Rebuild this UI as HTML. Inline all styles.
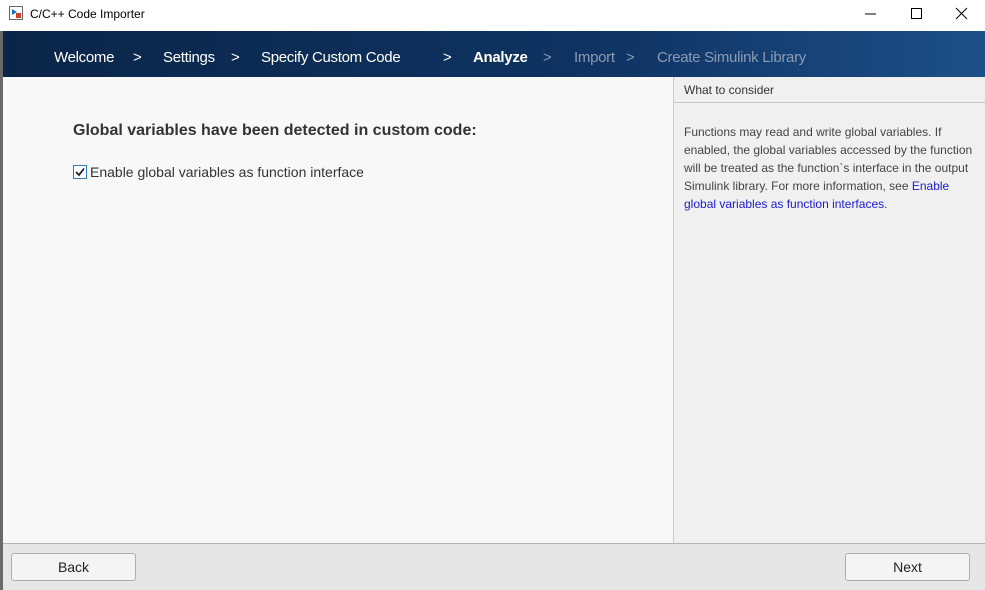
<!DOCTYPE html>
<html><head><style>
*{margin:0;padding:0;box-sizing:border-box}
body{width:985px;height:590px;position:relative;background:#fff;font-family:"Liberation Sans",Arial,sans-serif;overflow:hidden}
.t{position:absolute;font-size:13px;color:#000}
#frame{position:absolute;left:0;top:31px;width:3px;height:559px;background:#6a6a6a}
#ban{position:absolute;left:3px;top:31px;width:982px;height:46px;background:linear-gradient(90deg,#0a2548 0%,#0f3362 60%,#1d4f88 100%)}
.n{position:absolute;top:18px;font-size:15px;color:#fff;letter-spacing:-0.3px}
.d{color:#8a9bb3}
#main{position:absolute;left:3px;top:77px;width:670px;height:466px;background:#f8f8f8}
#side{position:absolute;left:673px;top:77px;width:312px;height:466px;background:#f0f0f0;border-left:1px solid #c8c8c8}
#foot{position:absolute;left:3px;top:543px;width:982px;height:47px;background:#e6e6e6;border-top:1px solid #b4b4b4}
.btn{position:absolute;top:9px;width:125px;height:28px;border:1px solid #adadad;border-radius:3px;background:#f4f4f4;font-size:14px;color:#222;text-align:center;line-height:26px}
</style></head><body>
<svg style="position:absolute;left:9px;top:6px" width="14" height="14"><rect x="0.5" y="0.5" width="13" height="13" fill="#fff" stroke="#666"/><path d="M3 3 L8 6 L3 9Z" fill="#1e6fc0"/><rect x="7" y="7" width="5" height="5" fill="#d04020"/></svg>
<div class="t" style="left:30px;top:7px;font-size:12px">C/C++ Code Importer</div>
<svg style="position:absolute;left:862px;top:6px" width="110" height="16"><line x1="3" y1="8" x2="14" y2="8" stroke="#000"/><rect x="49.5" y="2.5" width="10" height="10" fill="none" stroke="#000"/><path d="M94 2 L105 13 M105 2 L94 13" stroke="#000"/></svg>
<div id="frame"></div>
<div id="ban">
<span class="n" style="left:51px">Welcome</span>
<span class="n" style="left:130px">&gt;</span>
<span class="n" style="left:160px">Settings</span>
<span class="n" style="left:228px">&gt;</span>
<span class="n" style="left:258px">Specify Custom Code</span>
<span class="n" style="left:440px">&gt;</span>
<span class="n" style="left:470px;font-weight:bold">Analyze</span>
<span class="n d" style="left:540px">&gt;</span>
<span class="n d" style="left:571px">Import</span>
<span class="n d" style="left:623px">&gt;</span>
<span class="n d" style="left:654px">Create Simulink Library</span>
</div>
<div id="main">
<div class="t" style="left:70px;top:45px;font-size:16px;font-weight:bold;color:#333">Global variables have been detected in custom code:</div>
<svg style="position:absolute;left:70px;top:88px" width="14" height="14"><rect x="0.5" y="0.5" width="13" height="13" fill="#fff" stroke="#2d7ab8"/><path d="M3 7 L6 10 L11 3.5" fill="none" stroke="#222" stroke-width="1.8"/></svg>
<div class="t" style="left:87px;top:87px;font-size:14px;color:#333">Enable global variables as function interface</div>
</div>
<div id="side">
<div style="height:26px;border-bottom:1px solid #c8c8c8;font-size:12px;color:#333;padding:6px 10px">What to consider</div>
<div style="position:absolute;left:10px;top:46px;width:295px;font-size:12px;line-height:18px;color:#444">Functions may read and write global variables. If enabled, the global variables accessed by the function will be treated as the function`s interface in the output Simulink library. For more information, see <span style="color:#1a1ad0">Enable global variables as function interfaces</span>.</div>
</div>
<div id="foot">
<div class="btn" style="left:8px">Back</div>
<div class="btn" style="left:842px">Next</div>
</div>
</body></html>
